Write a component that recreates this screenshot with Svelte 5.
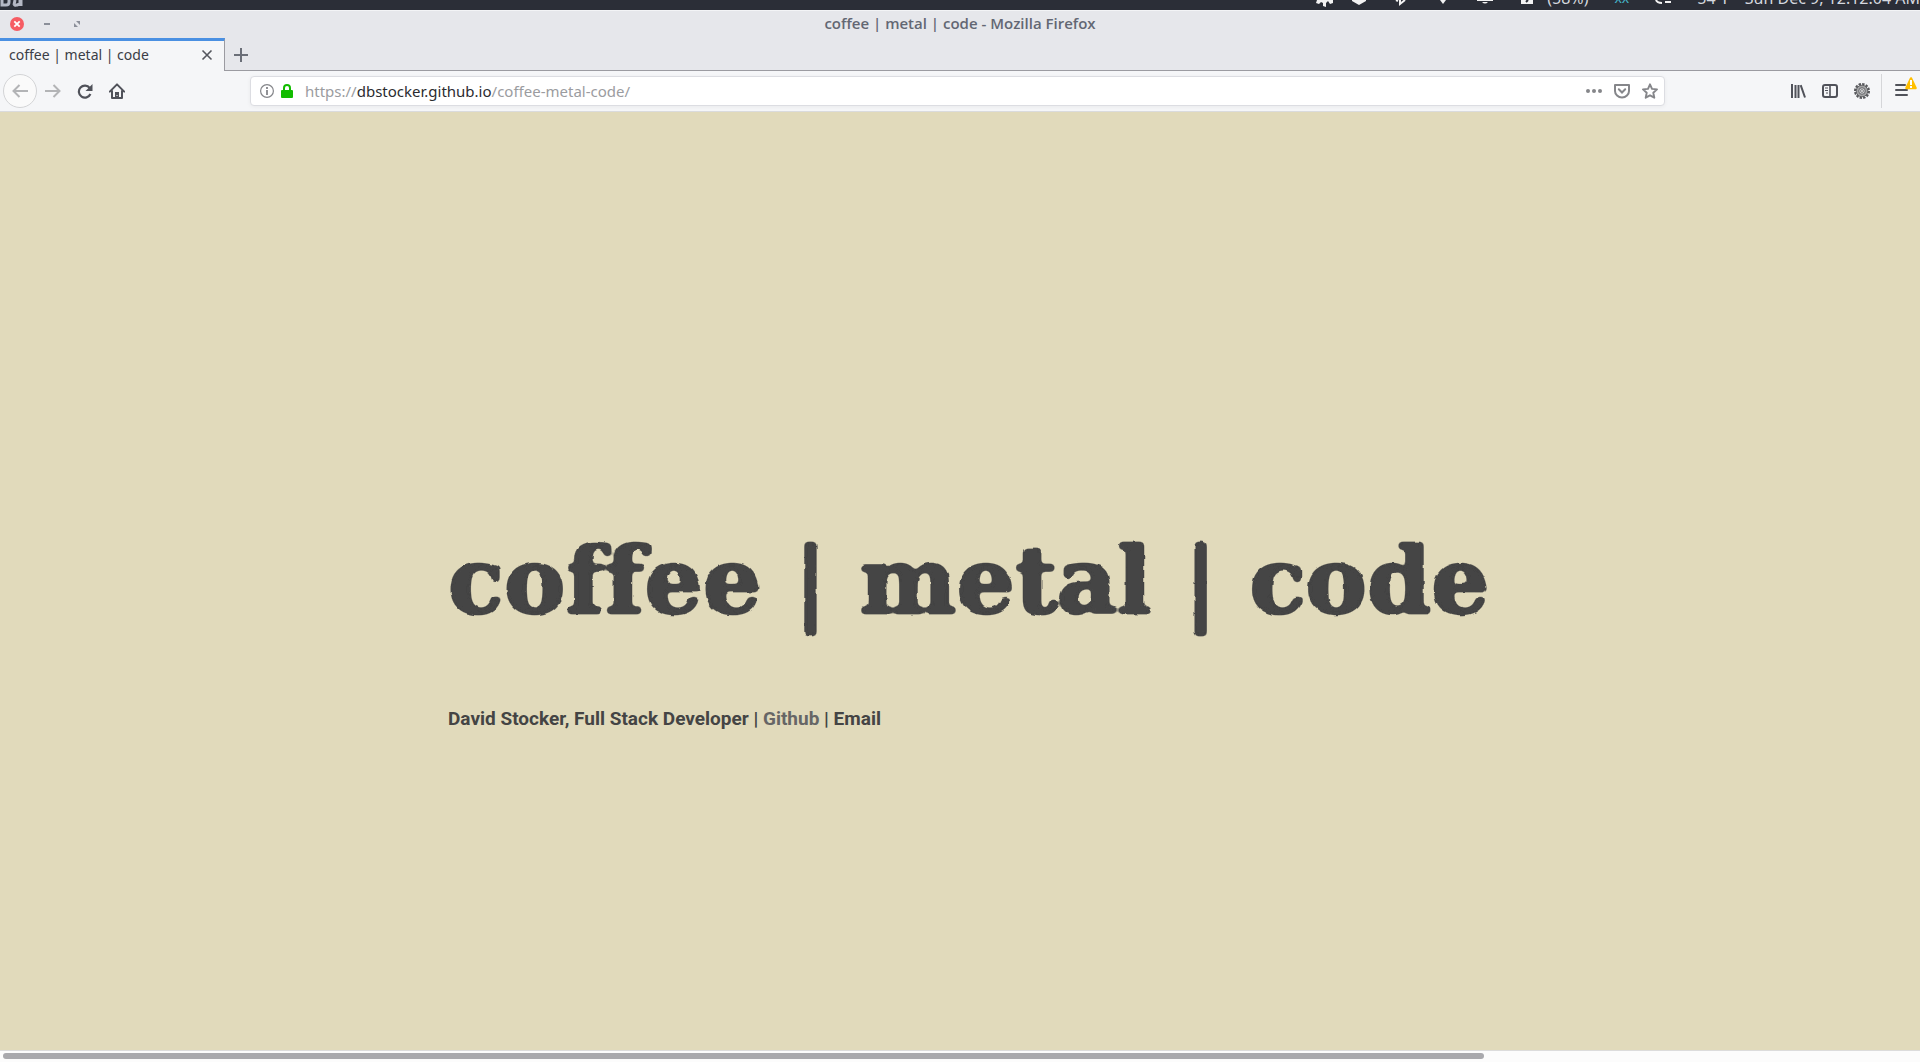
<script lang="ts">
  let address = $state('https://dbstocker.github.io/coffee-metal-code/');
  const host = 'dbstocker.github.io';
  const split = $derived(address.indexOf(host));
</script>

<div class="desktop">
  <header class="panel">
    <svg class="workspace" width="24" height="8" viewBox="0 0 24 8" aria-hidden="true">
      <path d="M2 0v5h4q3 0 3-3V0M14 5l1-5M14 4q1 2 3 1l3-1V0M21 0v6" fill="none" stroke="#b4b8c4" stroke-width="3" />
    </svg>
    <div class="indicators">
      <svg width="18" height="8" viewBox="0 0 18 8"><path d="M1 0h16v3l-3 1-2-3-2 2v4l-3-1V3L5 2 3 4 0 3z" fill="#f2f2f2" /></svg>
      <svg class="near" width="16" height="8" viewBox="0 0 16 8"><path d="M1 0h14v1l-7 4-7-4z" fill="#f2f2f2" /></svg>
      <svg width="16" height="8" viewBox="0 0 16 8"><path d="M3 0l2 1M7 0v4l5-4" fill="none" stroke="#f2f2f2" stroke-width="2" /></svg>
      <svg width="16" height="8" viewBox="0 0 16 8"><path d="M5 0h6L8 4z" fill="#f2f2f2" /></svg>
      <svg width="16" height="8" viewBox="0 0 16 8"><path d="M0 0h16v1H0zM5 2h6q-3 3-6 0z" fill="#f2f2f2" /></svg>
      <svg width="16" height="8" viewBox="0 0 16 8"><path d="M2 0h12v4H2z" fill="#f2f2f2" /><path d="M9 0L7 2" stroke="#2b2e37" stroke-width="2" /></svg>
      <span class="charge">(58%)</span>
      <span class="layout">xx</span>
      <svg width="16" height="8" viewBox="0 0 16 8"><path d="M1 0q1 3 6 3M10 2h6" fill="none" stroke="#f2f2f2" stroke-width="2" /></svg>
      <span class="weather">54°F</span>
      <span class="clock">Sun Dec 9, 12:12:04 AM</span>
    </div>
  </header>

  <div class="titlebar">
    <div class="window-buttons">
      <button aria-label="Close window">
        <svg width="14" height="14" viewBox="0 0 14 14"><circle cx="7" cy="7" r="7" fill="#f65c63" /><path d="M4.300 4.300l5.400 5.400m0-5.400l-5.400 5.400" stroke="#fff" stroke-width="1.800" /></svg>
      </button>
      <button aria-label="Minimize window">
        <svg width="14" height="14" viewBox="0 0 14 14"><path d="M4 7h6" stroke="#8b8f99" stroke-width="2" /></svg>
      </button>
      <button aria-label="Maximize window">
        <svg width="14" height="14" viewBox="0 0 14 14"><path d="M6 4h4v4zM4 6v4h4z" fill="#8b8f99" /></svg>
      </button>
    </div>
    <span class="window-title">coffee | metal | code - Mozilla Firefox</span>
  </div>

  <div class="tabstrip">
    <div class="tab">
      <span>coffee | metal | code</span>
      <button aria-label="Close tab"><svg width="16" height="16" viewBox="0 0 16 16"><path d="M3.500 3.500l9 9m0-9l-9 9" stroke="#55575f" stroke-width="1.600" /></svg></button>
    </div>
    <button class="new-tab" aria-label="New tab"><svg width="16" height="16" viewBox="0 0 16 16"><path d="M1 8h14M8 1v14" stroke="#6b6f78" stroke-width="2" /></svg></button>
  </div>

  <nav class="toolbar" aria-label="Navigation">
    <div class="history">
      <button class="back" aria-label="Back"><svg width="16" height="16" viewBox="0 0 16 16"><path d="M16 8H1.500M7.500 2l-6 6 6 6" fill="none" stroke="#b3b4b6" stroke-width="2" /></svg></button>
      <button aria-label="Forward"><svg width="16" height="16" viewBox="0 0 16 16"><path d="M0 8h14.500M8.500 2l6 6-6 6" fill="none" stroke="#b3b4b6" stroke-width="2" /></svg></button>
      <button aria-label="Reload"><svg width="16" height="16" viewBox="0 0 16 16"><path d="M12.700 5A6 6 0 1 0 13.400 11" fill="none" stroke="#50525a" stroke-width="2.200" /><path d="M15.500 1v7h-7z" fill="#50525a" /></svg></button>
      <button aria-label="Home"><svg width="16" height="16" viewBox="0 0 16 16"><path d="M.8 8.600L8 1.400l7.200 7.200M3 8v7h10V8" fill="none" stroke="#50525a" stroke-width="2" stroke-linejoin="round" stroke-linecap="round" /><path d="M6 9h4v6H6z" fill="#50525a" /><path d="M8 12v1" stroke="#fff" stroke-width="1" /></svg></button>
    </div>

    <div class="address">
      <button aria-label="Site information"><svg width="16" height="16" viewBox="0 0 16 16"><circle cx="8" cy="8" r="6.400" fill="none" stroke="#85868a" stroke-width="1.200" /><path d="M8 7v5M8 4v2" stroke="#85868a" stroke-width="1.800" /></svg></button>
      <svg class="lock" width="12" height="14" viewBox="0 0 12 14" aria-hidden="true"><path d="M3 7V4a3 3 0 0 1 6 0v3" fill="none" stroke="#12bc00" stroke-width="2" /><rect y="6" width="12" height="8" rx="1" fill="#12bc00" /></svg>
      <div class="url">
        <input aria-label="Address" bind:value={address} />
        <span aria-hidden="true">{address.slice(0, split)}<b>{host}</b>{address.slice(split + host.length)}</span>
      </div>
      <button aria-label="Page actions"><svg width="16" height="16" viewBox="0 0 16 16"><g fill="#85868a"><circle cx="2" cy="8" r="2" /><circle cx="8" cy="8" r="2" /><circle cx="14" cy="8" r="2" /></g></svg></button>
      <button aria-label="Save to Pocket"><svg width="16" height="16" viewBox="0 0 16 16"><path d="M1 2h14V8a7 6.500 0 0 1-14 0z" fill="none" stroke="#85868a" stroke-width="2" stroke-linejoin="round" /><path d="M4.800 6.300L8 9.500l3.200-3.200" fill="none" stroke="#85868a" stroke-width="2" stroke-linecap="round" /></svg></button>
      <button aria-label="Bookmark this page"><svg width="16" height="16" viewBox="0 0 16 16"><path d="M8 1.300l2 4.600 5 .5-3.700 3.400 1 4.900L8 12.300l-4.300 2.400 1-4.900L1 6.400l5-.5z" fill="none" stroke="#85868a" stroke-width="1.900" stroke-linejoin="round" /></svg></button>
    </div>

    <div class="tools">
      <button aria-label="Library"><svg width="16" height="16" viewBox="0 0 16 16"><path d="M2 1v14M5.500 2v13M8.500 2v13M10.700 2.200L15 14.500" fill="none" stroke="#50525a" stroke-width="2" /></svg></button>
      <button aria-label="Sidebars"><svg width="16" height="16" viewBox="0 0 16 16"><rect x="1" y="2" width="14" height="12" rx="2" fill="none" stroke="#50525a" stroke-width="2" /><path d="M8 2v12" stroke="#50525a" stroke-width="1.600" /><path d="M3 5h3M3 7.500h3M4 10h2" stroke="#50525a" /></svg></button>
      <button aria-label="Extension settings"><svg width="16" height="16" viewBox="0 0 16 16"><circle cx="8" cy="8" r="7" fill="none" stroke="#55565a" stroke-width="2" stroke-dasharray="2.400 1.260" /><circle cx="8" cy="8" r="5.800" fill="#a2a3a5" stroke="#606164" /><circle cx="8" cy="8" r="3.300" fill="#cfd0d2" stroke="#67686b" /><circle cx="8" cy="8" r="1.400" fill="#fff" stroke="#7c7d80" /></svg></button>
      <button class="menu" aria-label="Open menu">
        <svg width="22" height="22" viewBox="0 0 22 22"><path d="M1 9h9M1 14h11M1 19h11" stroke="#50525a" stroke-width="2" stroke-linecap="round" /><path d="M16 2.500L20.500 12h-9z" fill="#ffbf00" stroke="#ffbf00" stroke-width="2.500" stroke-linejoin="round" /><path d="M16 4v5M16 10v2" stroke="#fff" stroke-width="2" /></svg>
      </button>
    </div>
  </nav>

  <main>
    <svg class="defs" width="0" height="0" aria-hidden="true">
      <filter id="worn-ink" x="-2%" y="-10%" width="104%" height="120%">
        <feGaussianBlur stdDeviation="2" />
        <feComponentTransfer result="round"><feFuncA type="linear" slope="5" intercept="-1.700" /></feComponentTransfer>
        <feTurbulence type="fractalNoise" baseFrequency="0.120" numOctaves="1" seed="4" result="noise" />
        <feDisplacementMap in="round" in2="noise" scale="3" xChannelSelector="R" yChannelSelector="G" />
      </filter>
    </svg>
    <div class="intro">
      <h1>coffee | metal | code</h1>
      <p>David Stocker, Full Stack Developer | <a href="#github">Github</a> | <a class="mail" href="#email">Email</a></p>
    </div>
  </main>

  <div class="scrollbar"><div class="thumb"></div></div>
</div>

<style>
  :global(body) { margin: 0; }
  .desktop {
    display: flex;
    flex-direction: column;
    min-height: 100vh;
    overflow: hidden;
    background: #e1dabb;
    color: #3b3e47;
    font: 15px/20px "Noto Sans", sans-serif;
  }
  button {
    display: inline-flex;
    align-items: center;
    justify-content: center;
    padding: 0;
    border: 0;
    background: none;
    color: inherit;
  }
  svg { display: block; flex: none; }
  .panel {
    display: flex;
    justify-content: space-between;
    align-items: flex-end;
    height: 10px;
    overflow: hidden;
    background: #2b2e37;
    color: #d5d8df;
    font-size: 16px;
    white-space: nowrap;
  }
  .workspace { padding-bottom: 2px; }
  .indicators { display: flex; align-items: flex-end; gap: 26px; padding-bottom: 2px; }
  .near { margin-left: -9px; }
  .charge { margin-left: -14px; }
  .layout { color: #45b3c6; font-size: 14px; }
  .clock { margin-left: -12px; }

  .titlebar {
    display: grid;
    grid-template-columns: 1fr auto 1fr;
    align-items: center;
    height: 28px;
    padding: 0 10px 1px;
    box-sizing: border-box;
    border-top: 1px solid #f3f4f6;
    background: #e6e7eb;
  }
  .window-buttons { display: flex; gap: 16px; }
  .window-title { padding-bottom: 2px; color: #636773; font: 600 15px/20px "Open Sans", sans-serif; }

  .tabstrip {
    display: flex;
    height: 33px;
    background: linear-gradient(#9b9ba1, #9b9ba1) bottom / 100% 1px no-repeat #e6e7eb;
  }
  .tab {
    display: flex;
    align-items: center;
    justify-content: space-between;
    width: 225px;
    padding: 0 9px 2px;
    box-sizing: border-box;
    border-top: 3px solid #4a90e2;
    border-right: 1px solid #9b9ba1;
    background: #f5f6f8;
    font-size: 14px;
  }
  .new-tab { width: 32px; }

  .toolbar {
    display: flex;
    align-items: center;
    height: 41px;
    box-sizing: border-box;
    border-bottom: 1px solid #dadbdd;
    background: #f5f6f8;
  }
  .history { display: flex; align-items: center; width: 250px; padding-left: 3px; box-sizing: border-box; }
  .history button { width: 32px; height: 32px; }
  .history .back { width: 34px; height: 34px; border: 1px solid #d3d4d6; border-radius: 50%; background: #fafafa; }
  .address {
    display: flex;
    flex: 1;
    align-items: center;
    gap: 12px;
    height: 30px;
    margin-right: 117px;
    padding: 0 6px 0 8px;
    box-sizing: border-box;
    border: 1px solid #dcdde2;
    border-radius: 4px;
    background: #fff;
    box-shadow: 0 1px 4px #0000000d;
  }
  .lock { margin-left: -6px; }
  .url { position: relative; flex: 1; padding-bottom: 1px; color: #9b9ca0; font-size: 15px; }
  .url input {
    display: block;
    width: 100%;
    padding: 0;
    border: 0;
    outline: 0;
    background: none;
    color: transparent;
    caret-color: #222;
    font: inherit;
  }
  .url span { position: absolute; inset: 0; pointer-events: none; white-space: nowrap; }
  .url b { color: #2b2c30; font-weight: 400; }
  .tools { display: flex; align-items: center; }
  .tools button { width: 32px; height: 34px; }
  .tools .menu { width: 39px; margin-left: 3px; border-left: 1px solid #d5d6d9; padding: 0 2px 8px 12px; box-sizing: border-box; }

  main { display: flex; flex: 1; align-items: center; justify-content: center; padding-top: 92px; }
  .defs { position: absolute; }
  .intro { width: 1024px; max-width: 100%; color: #444; white-space: nowrap; }
  h1 {
    margin: 0 0 64px;
    font: bold 92px/120px "DejaVu Serif", serif;
    font-variant-ligatures: none;
    -webkit-text-stroke: 2px #444;
    filter: url(#worn-ink);
  }
  p { margin: 0; font: bold 19px/28px Roboto, sans-serif; }
  a { color: #666; text-decoration: none; }
  .mail { color: inherit; }

  .scrollbar { height: 12px; padding: 2px 3px 3px; box-sizing: border-box; border-top: 1px solid #dcdcdc; background: #fcfcfc; }
  .thumb { width: 77.400%; height: 6px; border-radius: 3px; background: #a9a9ad; }
</style>
